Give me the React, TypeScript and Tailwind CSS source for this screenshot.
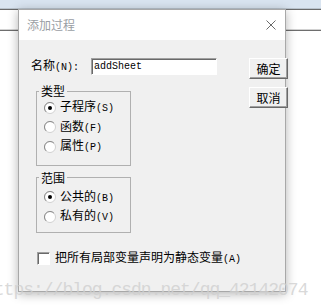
import type { ReactNode } from 'react';

// half-width latin glyphs in the dialog are narrow and serif, like SimSun
const A = ({ children }: { children: ReactNode }) => (
  <span className="font-['Liberation_Mono',monospace] text-[10px]">{children}</span>
);

const Radio = ({ checked }: { checked?: boolean }) => (
  <svg width="12" height="12" viewBox="0 0 12 12" className="shrink-0">
    <circle cx="6" cy="6" r="5.5" fill="#fff" stroke="#d0d0d0" />
    <path d="M2.1 9.9 A5.5 5.5 0 0 1 9.9 2.1" fill="none" stroke="#8a8a8a" />
    {checked && <circle cx="6" cy="6" r="2" fill="#000" />}
  </svg>
);

const RadioRow = ({ checked, children }: { checked?: boolean; children: ReactNode }) => (
  <div className="flex h-[19.5px] items-center gap-[4px] pl-[7px]">
    <Radio checked={checked} />
    <span className="whitespace-nowrap">{children}</span>
  </div>
);

const Button = ({ children }: { children: ReactNode }) => (
  <button className="flex h-[21px] w-[39px] items-center justify-center border border-t-white border-l-white border-r-[#696969] border-b-[#696969] bg-[#f0f0f0] shadow-[inset_-1px_-1px_0_#a0a0a0]">
    {children}
  </button>
);

const App = () => {
  return (
    <div className="relative h-[308px] w-[321px] overflow-hidden bg-white">
      {/* desktop behind the dialog */}
      <div className="h-[8px] bg-[#d9e4f0]" />
      <div className="h-[1px] bg-[#b9c3cd]" />
      <div className="h-[1px] bg-[#6b6b6b]" />
      <div className="h-[19px] bg-white" />
      <div className="h-[1px] bg-[#d2d2d2]" />
      <div className="h-[1px] bg-[#6e6e6e]" />

      {/* dialog window */}
      <div className="absolute left-[18px] top-[9px] flex h-[283px] w-[268px] flex-col border border-[#a8a8a8] bg-[#f0f0f0] font-['Noto_Sans_CJK_SC',sans-serif] text-[12px] leading-[12px] text-black shadow-[0_2px_10px_rgba(0,0,0,0.3)]">
        <div className="flex h-[30px] items-center justify-between bg-white pl-[8px] pr-[9px]">
          <span className="text-[#9a9ea4]">添加过程</span>
          <svg width="10" height="10" viewBox="0 0 10 10">
            <path d="M0.5 0.5 L9.5 9.5 M9.5 0.5 L0.5 9.5" stroke="#6a6a6a" strokeWidth="1" />
          </svg>
        </div>

        <div className="flex flex-1 pl-[12px] pt-[18px]">
          <div className="flex flex-col">
            <div className="flex items-center">
              <span className="w-[60px] whitespace-nowrap">
                名称<A>(N):</A>
              </span>
              <div className="flex h-[17px] w-[126px] items-center border border-t-[#a0a0a0] border-l-[#a0a0a0] border-r-white border-b-white bg-white pl-[2px] shadow-[inset_1px_1px_0_#696969]">
                <span className="font-['Liberation_Mono',monospace] text-[10px]">addSheet</span>
              </div>
            </div>

            <fieldset className="ml-[5px] mt-[10px] w-[95px] border border-[#b0b0b0] pb-[8px] pt-[1px]">
              <legend className="ml-[2px] px-[2px]">类型</legend>
              <RadioRow checked>
                子程序<A>(S)</A>
              </RadioRow>
              <RadioRow>
                函数<A>(F)</A>
              </RadioRow>
              <RadioRow>
                属性<A>(P)</A>
              </RadioRow>
            </fieldset>

            <fieldset className="ml-[5px] mt-[6px] w-[95px] border border-[#b0b0b0] pb-[5px] pt-[4px]">
              <legend className="ml-[2px] px-[2px]">范围</legend>
              <RadioRow checked>
                公共的<A>(B)</A>
              </RadioRow>
              <RadioRow>
                私有的<A>(V)</A>
              </RadioRow>
            </fieldset>

            <div className="ml-[6px] mt-[18px] flex items-center gap-[5px]">
              <div className="h-[13px] w-[13px] border border-t-[#a0a0a0] border-l-[#a0a0a0] border-r-white border-b-white bg-white shadow-[inset_1px_1px_0_#696969]" />
              <span className="whitespace-nowrap">
                把所有局部变量声明为静态变量<A>(A)</A>
              </span>
            </div>
          </div>

          <div className="ml-[8px] flex flex-col gap-[8px]">
            <Button>确定</Button>
            <Button>取消</Button>
          </div>
        </div>
      </div>

      {/* csdn watermark */}
      <div className="pointer-events-none absolute left-[-16px] top-[281px] whitespace-nowrap font-['Liberation_Mono',monospace] text-[18px] leading-[18px] tracking-[-1px] text-[#cfcfcf]/80">
        https://blog.csdn.net/qq_42142074
      </div>
    </div>
  );
};

export default App;
